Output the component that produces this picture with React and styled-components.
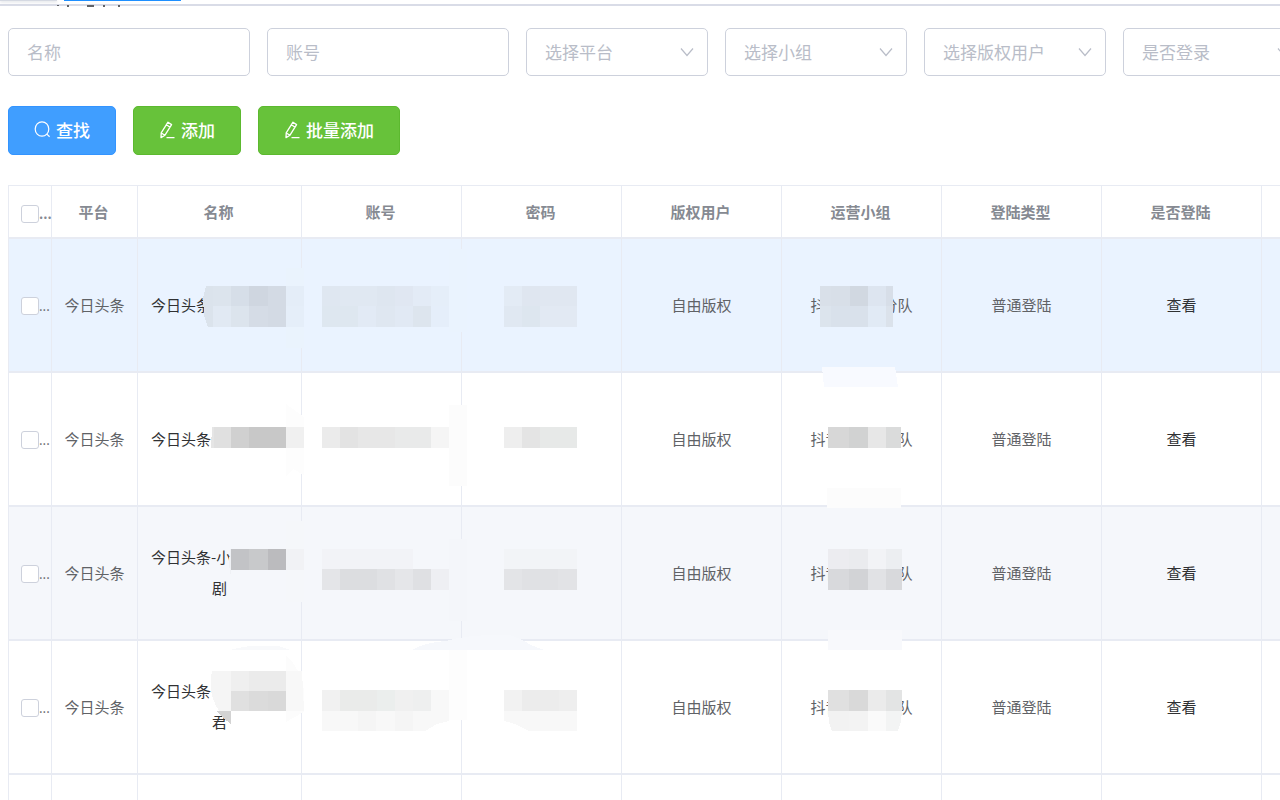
import React from "react";
import styled, { createGlobalStyle } from "styled-components";

const line = "#e8ebf3";

const GlobalStyle = createGlobalStyle`
  *, *::before, *::after { box-sizing: border-box; }
  body {
    margin: 0;
    background: #fff;
    color: #606266;
    font-family: "Noto Sans CJK SC", "Liberation Sans", sans-serif;
    font-size: 15px;
  }
`;

const Page = styled.main`
  height: 100vh;
  overflow: hidden;
`;

const TabStrip = styled.header`
  height: 6px;
  border-bottom: 2px solid #d9dce7;
  display: flex;
  gap: 7px;
`;

const TabEdge = styled.div`
  width: ${(p) => p.$width}px;
  height: 1px;
  background: ${(p) => (p.$active ? "#1e8fff" : "#d5d9e2")};
  box-shadow: ${(p) => (p.$active ? "none" : "0 1px 3px #c3c7d0")};
`;

const TitleEdge = styled.svg`
  position: absolute;
  top: 5px;
  left: 56px;
`;

const Content = styled.div`
  padding: 22px 0 0 8px;
  display: flex;
  flex-direction: column;
  gap: 30px;
`;

const Bar = styled.form`
  display: flex;
  gap: 17px;
`;

const TextField = styled.input`
  flex: none;
  width: 242px;
  height: 48px;
  padding: 0 18px 2px;
  border: 1px solid #cdd1dc;
  border-radius: 5px;
  background: #fff;
  font: inherit;
  font-size: 17px;
  color: #606266;
  outline: none;
  &::placeholder { color: #b9bdc8; opacity: 1; }
`;

const SelectBox = styled.div`
  flex: none;
  position: relative;
  width: 182px;
  svg {
    position: absolute;
    right: 13px;
    top: 19px;
    pointer-events: none;
  }
`;

const SelectField = styled.select`
  appearance: none;
  width: 100%;
  height: 48px;
  padding: 0 18px 2px;
  border: 1px solid #cdd1dc;
  border-radius: 5px;
  background: #fff;
  font: inherit;
  font-size: 17px;
  color: #b9bdc8;
  outline: none;
`;

const Actions = styled.div`
  display: flex;
  gap: 17px;
`;

const ActionButton = styled.button`
  display: flex;
  align-items: center;
  gap: 5px;
  height: 49px;
  padding: 0 25px 2px;
  border: 1px solid ${(p) => (p.$primary ? "#3394ff" : "#5cb92f")};
  border-radius: 5px;
  background: ${(p) => (p.$primary ? "#409eff" : "#67c23a")};
  color: #fff;
  font: inherit;
  font-size: 17px;
  font-weight: 500;
  white-space: nowrap;
`;

const TableArea = styled.div`
  position: relative;
  overflow: hidden;
`;

const Table = styled.table`
  table-layout: fixed;
  width: 1414px;
  border-collapse: separate;
  border-spacing: 0;
  border-top: 1px solid ${line};
  border-left: 1px solid ${line};
`;

const HeadCell = styled.th`
  height: 53px;
  padding: 0 2px 0 0;
  border-right: 1px solid ${line};
  border-bottom: 2px solid ${line};
  color: #868a92;
  font-weight: 700;
`;

const Row = styled.tr`
  background: ${(p) => p.$bg};
`;

const Cell = styled.td`
  height: 134px;
  padding: 0 ${(p) => (p.$name ? 13 : 0)}px 2px;
  border-right: 1px solid ${line};
  border-bottom: 2px solid ${line};
  text-align: center;
  line-height: 31px;
  color: ${(p) => (p.$name ? "#303133" : "#606266")};
`;

const Pick = styled.label`
  display: flex;
  align-items: center;
  padding: 4px 0 0 12px;
  font-size: 13px;
  line-height: 24px;
  white-space: nowrap;
`;

const CheckBox = styled.input`
  appearance: none;
  flex: none;
  width: 18px;
  height: 18px;
  margin: 0;
  border: 1px solid #cdd1dc;
  border-radius: 3px;
  background: #fff;
`;

const NameLine = styled.div`
  text-align: ${(p) => (p.$wrapped ? "center" : "left")};
`;

const Team = styled.span`
  display: inline-flex;
  gap: 42px;
`;

const ViewButton = styled.button`
  border: 0;
  padding: 0;
  background: none;
  font: inherit;
  color: #303133;
`;

const Mosaic = styled.svg`
  position: absolute;
  top: 0;
  left: 0;
  pointer-events: none;
`;

const Chevron = () => (
  <svg width="16" height="12" viewBox="0 0 16 12" fill="none" stroke="#b9bdc8" strokeWidth="1.2">
    <path d="M2 1.5 8 8.5 14 1.5" />
  </svg>
);

const SearchIcon = () => (
  <svg width="17" height="17" viewBox="0 0 17 17" fill="none" stroke="#fff" strokeWidth="1.2">
    <ellipse cx="8" cy="8" rx="6.8" ry="7.2" />
    <path d="m12.8 13.1 2.8 2.7" />
  </svg>
);

const EditIcon = () => (
  <svg width="17" height="18" viewBox="0 0 17 18" fill="none" stroke="#fff" strokeWidth="1.3" strokeLinejoin="round">
    <path d="M9 1.2 12.6 3.6 6 14.2 2 16.6 2.2 11.8ZM7.5 3.8 11 6.2M2.3 12 5.9 14.2M7.5 16.6H15.5" />
  </svg>
);

const columns = [
  ["平台", 86],
  ["名称", 164],
  ["账号", 160],
  ["密码", 160],
  ["版权用户", 160],
  ["运营小组", 160],
  ["登陆类型", 160],
  ["是否登陆", 160],
  ["", 160],
];

const rows = [
  { bg: "#eaf3ff", name: ["今日头条"] },
  { bg: "#fff", name: ["今日头条-"] },
  { bg: "#f5f7fb", name: ["今日头条-小", "剧"] },
  { bg: "#fff", name: ["今日头条", "君"] },
];

// Each strip: left edge, top, height, then [width, colour] for its tiles.
const strips = [
  [286, 268, 80, [[18, "#eaf3fd"]]],
  [213, 286, 20, [[18, "#dce4ed"], [18, "#d6dee8"], [19, "#cfd6e0"], [18, "#d3dae4"], [18, "#e4edf8"]]],
  [213, 306, 21, [[18, "#e1e9f3"], [18, "#dce4ed"], [19, "#d5dce6"], [18, "#d3dae4"], [18, "#e5eef9"]]],
  [449, 249, 83, [[18, "#eaf3fe"]]],
  [322, 286, 20, [[18, "#dfe7f1"], [37, "#e0e8f2"], [18, "#dee6f0"], [18, "#e0e7f2"], [18, "#e3ebf6"], [18, "#e5eef9"]]],
  [322, 306, 21, [[36, "#dee7f0"], [18, "#e2eaf5"], [19, "#dfe7f1"], [18, "#e1e9f4"], [18, "#dde5ee"], [18, "#e5eefa"]]],
  [504, 286, 20, [[18, "#e3ebf5"], [18, "#dfe6f0"], [37, "#e0e7f1"]]],
  [504, 306, 21, [[18, "#e0e8f2"], [18, "#dde6ef"], [37, "#e2e9f3"]]],
  [820, 286, 20, [[11, "#d9e0e9"], [19, "#d8dfe8"], [18, "#d1d8e1"], [18, "#dde5f0"], [7, "#d7dee8"]]],
  [820, 306, 21, [[11, "#dce4ed"], [37, "#d9e1eb"], [18, "#e1eaf5"], [7, "#dbe2eb"]]],

  [213, 427, 21, [[18, "#e0e0e0"], [18, "#d0d0d0"], [37, "#c8c8c8"]]],
  [449, 405, 81, [[18, "#fcfcfc"]]],
  [322, 427, 21, [[18, "#ebebeb"], [18, "#e3e3e3"], [37, "#e7e7e7"], [36, "#e9eaea"], [18, "#f5f5f5"]]],
  [504, 427, 21, [[18, "#eeeeee"], [18, "#e4e4e4"], [37, "#e7e9e8"]]],
  [828, 427, 21, [[21, "#d7d7d7"], [19, "#d1d2d2"], [18, "#e7e7e7"], [15, "#dadbdb"]]],
  [827, 488, 20, [[74, "#fcfcfc"]]],

  [286, 521, 81, [[18, "#f5f7fa"]]],
  [231, 549, 21, [[18, "#c2c3c6"], [19, "#c8c9cb"], [18, "#bbbbbe"], [18, "#f1f2f5"]]],
  [322, 549, 20, [[91, "#f2f3f7"]]],
  [322, 569, 21, [[18, "#e4e5e8"], [37, "#dcdde0"], [18, "#e0e1e4"], [18, "#e5e6e9"], [18, "#dfe0e3"], [18, "#eeeff3"]]],
  [449, 539, 82, [[18, "#f4f6fa"]]],
  [504, 549, 20, [[73, "#f2f4f7"]]],
  [504, 569, 21, [[18, "#e3e4e7"], [36, "#e0e1e4"], [19, "#e2e3e6"]]],
  [828, 549, 20, [[21, "#ececf0"], [19, "#eaebee"], [18, "#f2f3f6"], [16, "#eceef1"]]],
  [828, 569, 21, [[21, "#d8d9dc"], [19, "#d2d3d6"], [18, "#e1e2e5"], [16, "#d8d9dc"]]],
  [828, 630, 20, [[74, "#f8f9fc"]]],

  [449, 650, 70, [[18, "#fdfdfd"]]],
  [322, 690, 21, [[18, "#f1f1f1"], [37, "#eaebea"], [18, "#ebeeed"], [18, "#f0f0f0"], [18, "#eeefef"], [18, "#f8f8f8"]]],
  [504, 690, 21, [[18, "#f2f2f2"], [37, "#ececec"], [18, "#eeeeee"]]],
  [828, 690, 21, [[21, "#e0e0e0"], [19, "#d9d9d9"], [18, "#ebebeb"], [16, "#e3e4e4"]]],
];

const patches = [
  ["M206 286H213V327H208L204 315 203 298Z", "#dbe3ec"],
  ["M822 367H895L898 387H824Z", "#f8faff"],
  ["M212 427H214V448H211Z", "#e5e5e5"],
  ["M286 404 304 417V475L293 469 286 476Z", "#fdfdfd"],
  ["M286 427H304V448H286Z", "#f0f0f0"],
  ["M231 549V577L229 565 230 549Z", "#eff1f5"],
  ["M412 650Q426 642 446 641Q470 634 509 635Q520 638 531 645L544 650Z", "#f6f8fc"],
  ["M230 650Q250 644 278 646L290 650Z", "#f8f9fb"],
  ["M286 655Q300 668 304 690V712L286 722Z", "#fcfcfc"],
  ["M212 671H231V711H219Q207 692 212 671Z", "#f5f5f5"],
  ["M231 671H249V691H231Z", "#efefef"],
  ["M249 671H286V691H249Z", "#ebebeb"],
  ["M231 691H249V711H231Z", "#e0e0e0"],
  ["M249 691H268V711H249Z", "#dbdbdb"],
  ["M268 691H286V711H268Z", "#d9d9d9"],
  ["M286 671H302L304 711H286Z", "#f8f8f8"],
  ["M217 711H231V724L223 718Z", "#d3d3d3"],
  ["M322 711H449V721L437 724 425 731H322Z", "#f8f8f8"],
  ["M358 711H376V731H358ZM395 711H413V731H395Z", "#f5f5f5"],
  ["M504 711H577V731H529L515 724 504 721Z", "#f8f8f8"],
  ["M828 711H849V731H832L829 722Z", "#f2f2f2"],
  ["M849 711H868V731H849Z", "#f3f3f3"],
  ["M868 711H886V731H868Z", "#fafafa"],
  ["M886 711H902L901 722 898 731H886Z", "#f3f4f4"],
];

function Masks() {
  return (
    <Mosaic width="1272" height="615" viewBox="8 185 1272 615" shapeRendering="crispEdges" aria-hidden="true">
      {strips.map(([left, top, height, tiles], s) => {
        let x = left;
        return tiles.map(([width, fill], t) => {
          const tile = <rect key={`${s}-${t}`} x={x} y={top} width={width} height={height} fill={fill} />;
          x += width;
          return tile;
        });
      })}
      {patches.map(([d, fill]) => (
        <path key={d} d={d} fill={fill} />
      ))}
    </Mosaic>
  );
}

function Filter({ label }) {
  return (
    <SelectBox>
      <SelectField aria-label={label} defaultValue="">
        <option value="">{label}</option>
      </SelectField>
      <Chevron />
    </SelectBox>
  );
}

export default function App() {
  return (
    <Page>
      <GlobalStyle />
      <TabStrip>
        <TabEdge $width={57} />
        <TabEdge $width={117} $active />
      </TabStrip>
      <TitleEdge width="68" height="2" aria-hidden="true">
        <path d="M2 0V1M12 0V2M48 0V2M63 0V2" stroke="#606266" strokeWidth="2" />
        <path d="M31 1H38" stroke="#606266" strokeWidth="2" />
      </TitleEdge>
      <Content>
        <Bar>
          <TextField placeholder="名称" aria-label="名称" />
          <TextField placeholder="账号" aria-label="账号" />
          <Filter label="选择平台" />
          <Filter label="选择小组" />
          <Filter label="选择版权用户" />
          <Filter label="是否登录" />
        </Bar>
        <Actions>
          <ActionButton type="button" $primary><SearchIcon />查找</ActionButton>
          <ActionButton type="button"><EditIcon />添加</ActionButton>
          <ActionButton type="button"><EditIcon />批量添加</ActionButton>
        </Actions>
        <TableArea>
          <Table>
            <colgroup>
              <col style={{ width: 43 }} />
              {columns.map(([title, width]) => (
                <col key={title} style={{ width }} />
              ))}
            </colgroup>
            <thead>
              <tr>
                <HeadCell>
                  <Pick><CheckBox type="checkbox" aria-label="全选" />...</Pick>
                </HeadCell>
                {columns.map(([title]) => (
                  <HeadCell key={title}>{title}</HeadCell>
                ))}
              </tr>
            </thead>
            <tbody>
              {rows.map((row, i) => (
                <Row key={i} $bg={row.bg}>
                  <Cell>
                    <Pick><CheckBox type="checkbox" aria-label="选择" />...</Pick>
                  </Cell>
                  <Cell>今日头条</Cell>
                  <Cell $name>
                    {row.name.map((text, n) => (
                      <NameLine key={n} $wrapped={n > 0}>{text}</NameLine>
                    ))}
                  </Cell>
                  <Cell />
                  <Cell />
                  <Cell>自由版权</Cell>
                  <Cell><Team><span>抖音</span><span>分队</span></Team></Cell>
                  <Cell>普通登陆</Cell>
                  <Cell><ViewButton type="button">查看</ViewButton></Cell>
                  <Cell />
                </Row>
              ))}
              <Row $bg="#fff">
                <Cell />
                {columns.map(([title]) => (
                  <Cell key={title} />
                ))}
              </Row>
            </tbody>
          </Table>
          <Masks />
        </TableArea>
      </Content>
    </Page>
  );
}
